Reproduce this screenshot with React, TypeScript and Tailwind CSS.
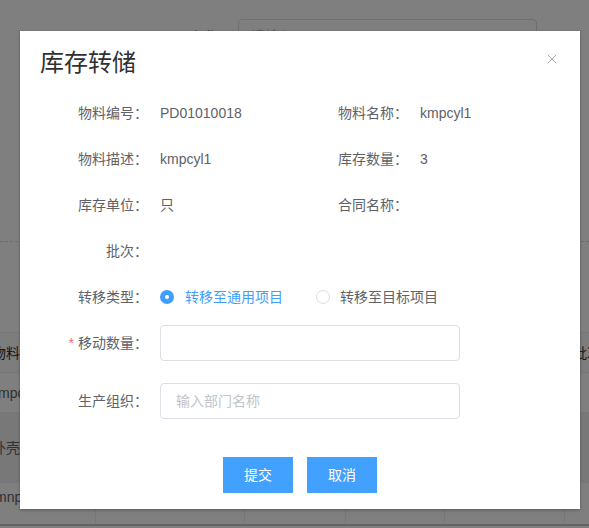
import { X } from 'lucide-react';

const FONT = { fontFamily: '"Liberation Sans", "Noto Sans CJK SC", sans-serif' };

function InfoRow({ label, value, label2, value2 }: { label: string; value?: string; label2?: string; value2?: string }) {
  return (
    <div className="mb-[10px] flex h-9 items-center text-sm text-[#606266]">
      <div className="flex w-[260px] items-center">
        <span className="w-[120px] pr-3 text-right">{label}：</span>
        <span>{value}</span>
      </div>
      {label2 && (
        <div className="flex w-[260px] items-center">
          <span className="w-[120px] pr-3 text-right">{label2}：</span>
          <span>{value2}</span>
        </div>
      )}
    </div>
  );
}

function Background() {
  return (
    <div className="h-[528px] w-[589px] bg-white text-sm text-[#606266]">
      <div className="flex h-[241px] items-start pt-[19px]">
        <span className="w-[238px] pr-5 pt-2 text-right">
          <span className="text-[#f56c6c]">*</span> 名称
        </span>
        <div className="h-8 w-[299px] rounded border border-[#dcdfe6] px-3 leading-8 text-[#c0c4cc]">请输入</div>
      </div>
      <div className="h-[91px] border-t border-dashed border-[#dcdfe6]" />
      <div className="flex h-[41px] items-center justify-between border-y border-[#ebeef5] bg-[#fafafa] text-[#303133]">
        <span className="-ml-2">物料名称</span>
        <span className="-mr-3">批次</span>
      </div>
      <div className="flex h-10 items-center border-b border-[#ebeef5]">
        <span className="-ml-[9px]">kmpcyl1</span>
      </div>
      <div className="flex h-[70px] items-center border-b border-[#ebeef5] bg-[#f0f0f0]">
        <span className="-ml-[8px]">外壳图纸</span>
      </div>
      <div className="grid h-[43px] grid-cols-[96px_149px_101px_99px_120px_24px] border-b-2 border-[#c8c8c8]">
        <span className="-ml-3 border-r border-[#ebeef5] pt-1">kmnpcl</span>
        <span className="border-r border-[#ebeef5] pt-1 pl-[100px]">1</span>
        <span className="border-r border-[#ebeef5]" />
        <span className="border-r border-[#ebeef5]" />
        <span className="border-r border-[#ebeef5]" />
        <span />
      </div>
    </div>
  );
}

export default function App() {
  return (
    <div className="relative h-[528px] w-[589px] overflow-hidden" style={FONT}>
      <Background />
      <div className="absolute inset-0 bg-black/50" />
      <div className="absolute left-[20px] top-[31px] w-[560px] bg-white shadow-[0_1px_3px_rgba(0,0,0,0.3)]">
        <div className="relative px-5 pb-5 pt-5">
          <h2 className="text-2xl leading-6 text-[#303133]">库存转储</h2>
          <button className="absolute right-[20px] top-[20px] text-[#909399]">
            <X className="h-[16px] w-[16px]" strokeWidth={1.2} />
          </button>
        </div>
        <div className="px-5">
          <InfoRow label="物料编号" value="PD01010018" label2="物料名称" value2="kmpcyl1" />
          <InfoRow label="物料描述" value="kmpcyl1" label2="库存数量" value2="3" />
          <InfoRow label="库存单位" value="只" label2="合同名称" value2="" />
          <InfoRow label="批次" />
          <div className="mb-[10px] flex h-9 items-center text-sm text-[#606266]">
            <span className="w-[120px] pr-3 text-right">转移类型：</span>
            <label className="flex items-center">
              <span className="flex h-[14px] w-[14px] items-center justify-center rounded-full bg-[#409eff]">
                <span className="h-1 w-1 rounded-full bg-white" />
              </span>
              <span className="ml-[11px] text-[#409eff]">转移至通用项目</span>
            </label>
            <label className="ml-[33px] flex items-center">
              <span className="h-[14px] w-[14px] rounded-full border border-[#dcdfe6] bg-white" />
              <span className="ml-[10px]">转移至目标项目</span>
            </label>
          </div>
          <div className="mb-[22px] flex h-9 items-center text-sm text-[#606266]">
            <span className="w-[120px] pr-3 text-right">
              <span className="mr-1 text-[#f56c6c]">*</span>移动数量：
            </span>
            <input className="h-9 w-[300px] rounded border border-[#dcdfe6] px-[15px] outline-none" />
          </div>
          <div className="flex h-9 items-center text-sm text-[#606266]">
            <span className="w-[120px] pr-3 text-right">生产组织：</span>
            <input
              placeholder="输入部门名称"
              className="h-9 w-[300px] rounded border border-[#dcdfe6] px-[15px] outline-none placeholder:text-[#c0c4cc]"
            />
          </div>
        </div>
        <div className="flex justify-center gap-[14px] pb-4 pt-[38px]">
          <button className="h-9 w-[70px] bg-[#42a0ff] text-sm text-white">提交</button>
          <button className="h-9 w-[70px] bg-[#42a0ff] text-sm text-white">取消</button>
        </div>
      </div>
    </div>
  );
}
